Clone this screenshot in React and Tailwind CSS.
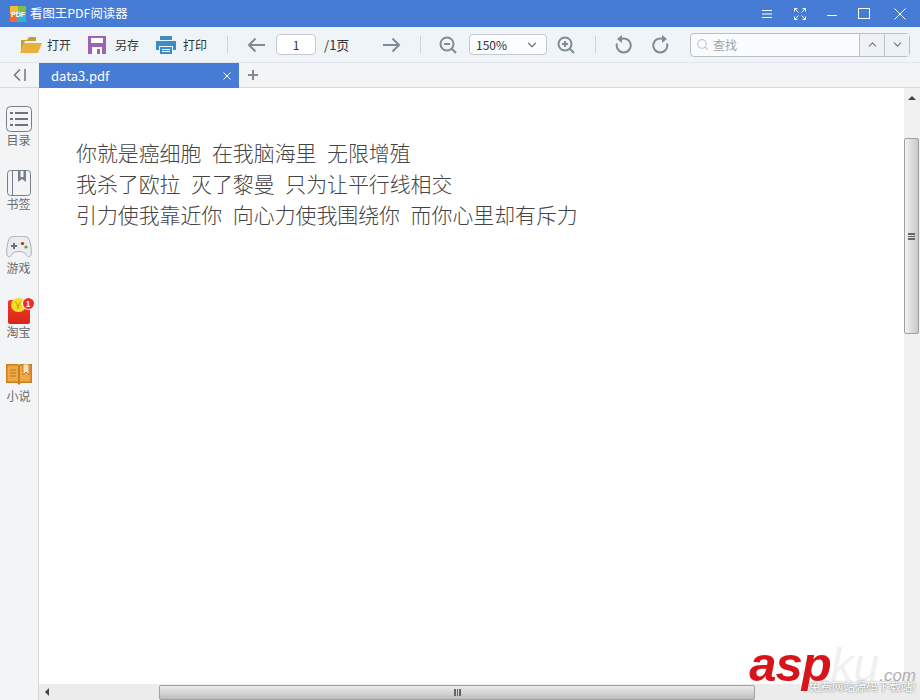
import React from "react";
import { ChevronDown, ChevronUp, Search } from "lucide-react";

const ui = "font-['Noto_Sans_CJK_SC','Liberation_Sans',sans-serif]";

function TitleBar() {
  return (
    <div className="flex h-[27px] items-center bg-[#477cd6] pl-[10px] text-white">
      <svg width="16" height="16" viewBox="0 0 16 16" className="shrink-0">
        <rect x="0" y="0" width="8" height="8" fill="#f6b93b" />
        <rect x="8" y="0" width="8" height="8" fill="#7ac143" />
        <rect x="0" y="8" width="8" height="8" fill="#ef6a3a" />
        <rect x="8" y="8" width="8" height="8" fill="#2bb7d4" />
        <text x="8" y="11" textAnchor="middle" fontSize="7" fontWeight="700" fill="#fff" fontFamily="Liberation Sans">PDF</text>
      </svg>
      <span className="ml-[4px] text-[12.4px] leading-none">看图王PDF阅读器</span>
      <div className="ml-auto mr-[14px] flex items-center">
        <svg width="10" height="10" viewBox="0 0 10 10" stroke="#fff" fill="none">
          <path d="M0 1.5h10M0 5h10M0 8.5h10" />
        </svg>
        <svg width="12" height="12" viewBox="0 0 12 12" stroke="#fff" fill="none" className="ml-[22px]">
          <path d="M1 1l3.5 3.5M11 1L7.500 4.500M1 11l3.500-3.500M11 11L7.500 7.500M.5 3.500v-3h3M8.500.5h3v3M.5 8.500v3h3M8.500 11.500h3v-3" />
        </svg>
        <div className="ml-[21px] mt-[4px] h-px w-[10px] bg-white" />
        <div className="ml-[21px] h-[11px] w-[12px] border-[1.5px] border-white" />
        <svg width="12" height="12" viewBox="0 0 12 12" stroke="#fff" fill="none" className="ml-[24px]">
          <path d="M.5.500l11 11M11.500.5l-11 11" />
        </svg>
      </div>
    </div>
  );
}

function FileButton({ icon, label, className }) {
  return (
    <div className={`flex items-center ${className}`}>
      {icon}
      <span className="text-[12px] leading-none text-[#333]">{label}</span>
    </div>
  );
}

function Sep({ className }) {
  return <div className={`h-[17px] w-px bg-[#ccd2d8] ${className}`} />;
}

function Toolbar() {
  return (
    <div className="flex h-[36px] items-center border-b border-[#e2e6ea] bg-[#eff4f8]">
      <FileButton
        className="ml-[20px]"
        label="打开"
        icon={
          <svg width="22" height="18" viewBox="0 0 22 18" className="mr-[5px]">
            <path d="M1 16V4h6l2-3h7v4H5z" fill="#c99a35" />
            <path d="M0 17L4 7h18l-4 10z" fill="#e8b23a" />
          </svg>
        }
      />
      <FileButton
        className="ml-[17px]"
        label="另存"
        icon={
          <svg width="18" height="18" viewBox="0 0 18 18" className="mr-[9px]">
            <path d="M0 0h18v18H0z" fill="#9a64b4" />
            <path d="M3 2h12v5H3z" fill="#fff" />
            <path d="M4 11h10v7H4z" fill="#fff" />
            <path d="M9 13h3v5H9z" fill="#9a64b4" />
          </svg>
        }
      />
      <FileButton
        className="ml-[17px]"
        label="打印"
        icon={
          <svg width="20" height="18" viewBox="0 0 20 18" className="mr-[7px]">
            <path d="M4 0h12v4H4z" fill="#3d8cc4" />
            <path d="M0 5h20v9h-3v-4H3v4H0z" fill="#3d8cc4" />
            <path d="M4 11h12v7H4z" fill="#3d8cc4" />
            <path d="M6 13h8v1H6zM6 15h8v1H6z" fill="#fff" />
          </svg>
        }
      />
      <Sep className="ml-[20px]" />
      <svg width="18" height="16" viewBox="0 0 18 16" fill="none" stroke="#7f8b96" strokeWidth="2" className="ml-[19px]">
        <path d="M18 8H2M8.500 1.500L2 8l6.500 6.500" />
      </svg>
      <div className="ml-[11px] flex h-[21px] w-[40px] items-center justify-center rounded-[4px] border border-[#c3c9cf] bg-white text-[12px] text-[#333]">
        1
      </div>
      <span className="ml-[8px] w-[59px] text-[13px] leading-none text-[#333]">/1页</span>
      <svg width="18" height="16" viewBox="0 0 18 16" fill="none" stroke="#7f8b96" strokeWidth="2">
        <path d="M0 8h16M9.500 1.500L16 8l-6.500 6.500" />
      </svg>
      <Sep className="ml-[19px]" />
      <svg width="18" height="18" viewBox="0 0 18 18" fill="none" stroke="#7f8b96" strokeWidth="2" className="ml-[18px]">
        <circle cx="8" cy="8" r="6.500" />
        <path d="M5 8h6M13 13l4 4" />
      </svg>
      <div className="ml-[12px] flex h-[21px] w-[78px] items-center justify-between rounded-[4px] border border-[#c3c9cf] bg-[#fafcfd] pl-[6px] pr-[7px] text-[12px] text-[#333]">
        150%
        <ChevronDown size={14} color="#6e7680" />
      </div>
      <svg width="18" height="18" viewBox="0 0 18 18" fill="none" stroke="#7f8b96" strokeWidth="2" className="ml-[10px]">
        <circle cx="8" cy="8" r="6.500" />
        <path d="M5 8h6M8 5v6M13 13l4 4" />
      </svg>
      <Sep className="ml-[20px]" />
      <svg width="18" height="20" viewBox="0 0 18 20" fill="none" stroke="#7f8b96" strokeWidth="2" className="ml-[19px]">
        <path d="M5 4.500a7 7 0 1 1-3 4" />
        <path d="M7 0v8L2 4z" fill="#7f8b96" stroke="none" />
      </svg>
      <svg width="18" height="20" viewBox="0 0 18 20" fill="none" stroke="#7f8b96" strokeWidth="2" className="ml-[18px]">
        <path d="M13 4.500a7 7 0 1 0 3 4" />
        <path d="M11 0v8l5-4z" fill="#7f8b96" stroke="none" />
      </svg>
      <div className="ml-[21px] flex h-[24px] w-[220px] items-center rounded-[4px] border border-[#b9c0c8] bg-[#f9fbfd]">
        <Search size={13} color="#c4c8cc" className="ml-[5px]" />
        <span className="ml-[4px] flex-1 text-[12px] text-[#a3a3a3]">查找</span>
        <div className="flex h-full w-[25px] items-center justify-center border-l border-[#b9c0c8] bg-[#eff2f5]">
          <ChevronUp size={13} color="#6e7680" />
        </div>
        <div className="flex h-full w-[25px] items-center justify-center border-l border-[#b9c0c8] bg-[#eff2f5]">
          <ChevronDown size={13} color="#6e7680" />
        </div>
      </div>
    </div>
  );
}

function TabRow() {
  return (
    <div className="flex h-[25px] items-stretch border-b border-[#d8d8d8] bg-[#f2f4f6]">
      <div className="flex w-[38px] items-center justify-center">
        <svg width="13" height="12" viewBox="0 0 13 12" fill="none" stroke="#6e7680" strokeWidth="1.500">
          <path d="M7 .5L1.500 6 7 11.500M12 0v12" />
        </svg>
      </div>
      <div className="ml-px flex h-[25px] w-[200px] items-center bg-[#477cd6] pl-[12px] pr-[8px] text-white">
        <span className="flex-1 text-[13px] leading-none">data3.pdf</span>
        <svg width="8" height="8" viewBox="0 0 8 8" stroke="#fff" fill="none">
          <path d="M.5.500l7 7M7.500.5l-7 7" />
        </svg>
      </div>
      <svg width="10" height="10" viewBox="0 0 10 10" stroke="#7f8b96" strokeWidth="2" className="ml-[9px] self-center">
        <path d="M0 5h10M5 0v10" />
      </svg>
    </div>
  );
}

function SideItem({ icon, label }) {
  return (
    <div className="flex h-[64px] flex-col items-center">
      <div className="flex h-[26px] items-center justify-center">{icon}</div>
      <span className="text-[12px] leading-[16px] text-[#6b6b6b]">{label}</span>
    </div>
  );
}

function Sidebar() {
  return (
    <div className="w-[39px] shrink-0 border-r border-[#d8d8d8] bg-[#f2f4f6] pr-px pt-[18px]">
      <SideItem
        label="目录"
        icon={
          <svg width="26" height="26" viewBox="0 0 26 26" fill="none">
            <rect x=".5" y=".5" width="25" height="25" rx="4" stroke="#77808a" />
            <path d="M4 7h3M9 7h13M4 13h3M9 13h13M4 19h3M9 19h13" stroke="#6a737d" strokeWidth="2" />
          </svg>
        }
      />
      <SideItem
        label="书签"
        icon={
          <svg width="24" height="26" viewBox="0 0 24 26" fill="none">
            <rect x=".5" y=".5" width="23" height="25" rx="3" stroke="#77808a" />
            <path d="M5.500 1v25" stroke="#77808a" />
            <path d="M11 1h8v11l-4-3-4 3z" fill="#77808a" />
            <path d="M13.500 1h3v6h-3z" fill="#f2f4f6" />
          </svg>
        }
      />
      <SideItem
        label="游戏"
        icon={
          <svg width="26" height="22" viewBox="0 0 26 22">
            <path d="M5 1c4-1 12-1 16 0 3 1 5 12 4 18-1 3-4 2-6-2-3-2-9-2-12 0-2 4-5 5-6 2C0 13 2 2 5 1z" fill="#e9ecf0" stroke="#aab1b9" />
            <path d="M5 9h6v2H5zM7 7h2v6H7z" fill="#6a737d" />
            <circle cx="16.500" cy="7.500" r="1.600" fill="#c81e1e" />
            <circle cx="20" cy="11" r="1.600" fill="#4caf1f" />
          </svg>
        }
      />
      <SideItem
        label="淘宝"
        icon={
          <div className="relative h-[26px] w-[22px]">
            <div className="absolute bottom-0 left-0 h-[24px] w-[22px] rounded-[2px] bg-gradient-to-b from-[#f23a26] to-[#d9261c]" />
            <div className="absolute left-[3px] top-0 flex h-[14px] w-[15px] items-center justify-center rounded-full bg-[#fbe02a] text-[10px] leading-none text-[#d69a0a]">
              ￥
            </div>
            <div className="absolute -right-[4px] top-0 flex h-[11px] w-[11px] items-center justify-center rounded-full bg-[#ee2b2b] text-[8px] font-bold leading-none text-white ring-1 ring-white">
              1
            </div>
          </div>
        }
      />
      <SideItem
        label="小说"
        icon={
          <svg width="26" height="22" viewBox="0 0 26 22">
            <path d="M0 0h12l1 1 1-1h12v19H15l-2 2-2-2H0z" fill="#c77f22" />
            <path d="M1.500 1.500H12v16H1.500z" fill="#f0a745" />
            <path d="M14 1.500h10.500v16H14z" fill="#f0a745" />
            <path d="M4 6h6M4 9h6M4 12h6" stroke="#b5781f" />
            <path d="M17 0h6v11l-3-3-3 3z" fill="#f7e3bd" stroke="#c77f22" />
          </svg>
        }
      />
    </div>
  );
}

function VScroll() {
  return (
    <div className="flex w-[16px] shrink-0 flex-col bg-[#f0f0f0]">
      <div className="flex h-[50px] justify-center pt-[8px]">
        <div className="h-0 w-0 border-x-[4px] border-b-[4px] border-x-transparent border-b-[#444]" />
      </div>
      <div className="flex h-[196px] w-[15px] items-center justify-center rounded-[2px] border border-[#a0a0a0] bg-gradient-to-r from-[#f2f2f2] to-[#c8c8c8]">
        <div className="h-[7px] w-[7px] border-y border-[#666] bg-[repeating-linear-gradient(#666_0_1px,transparent_1px_2px)]" />
      </div>
    </div>
  );
}

function HScroll() {
  return (
    <div className="relative flex h-[16px] items-center bg-[#ececec]">
      <div className="ml-[6px] h-0 w-0 border-y-[4px] border-r-[4px] border-y-transparent border-r-[#444]" />
      <div className="ml-[110px] flex h-[15px] w-[596px] items-center justify-center rounded-[2px] border border-[#a0a0a0] bg-gradient-to-b from-[#ededed] to-[#bdbdbd]">
        <div className="h-[7px] w-[7px] border-x border-[#666] bg-[repeating-linear-gradient(90deg,#666_0_1px,transparent_1px_2px)]" />
      </div>
    </div>
  );
}

export default function App() {
  return (
    <div className={`relative flex h-[700px] w-[920px] flex-col overflow-hidden bg-white ${ui}`}>
      <TitleBar />
      <Toolbar />
      <TabRow />
      <div className="flex min-h-0 flex-1">
        <Sidebar />
        <div className="flex min-w-0 flex-1 flex-col">
          <div className="flex min-h-0 flex-1">
            <div className="flex-1 pl-[37px] pt-[49px] text-[20.9px] font-light leading-[31px] text-[#444] [word-spacing:6px]">
              <p>你就是癌细胞 在我脑海里 无限增殖</p>
              <p>我杀了欧拉 灭了黎曼 只为让平行线相交</p>
              <p>引力使我靠近你 向心力使我围绕你 而你心里却有斥力</p>
            </div>
            <VScroll />
          </div>
          <HScroll />
        </div>
      </div>

      {/* watermark */}
      <div className="absolute bottom-[7px] right-[4px] flex w-[170px] flex-col items-end">
        <div className="flex h-[41px] items-baseline font-['Liberation_Sans',sans-serif] leading-none">
          <span className="text-[49px] font-bold italic tracking-[-1px] text-[#d7141a]">asp</span>
          <span className="text-[46px] italic text-[#f0f0f0]">ku</span>
          <span className="text-[17px] italic text-[#b0b0b0]">.com</span>
        </div>
        <span className="h-[12px] text-[11.5px] leading-none text-white [text-shadow:0_0_2px_#555]">免费网站源码下载站!</span>
      </div>
    </div>
  );
}
